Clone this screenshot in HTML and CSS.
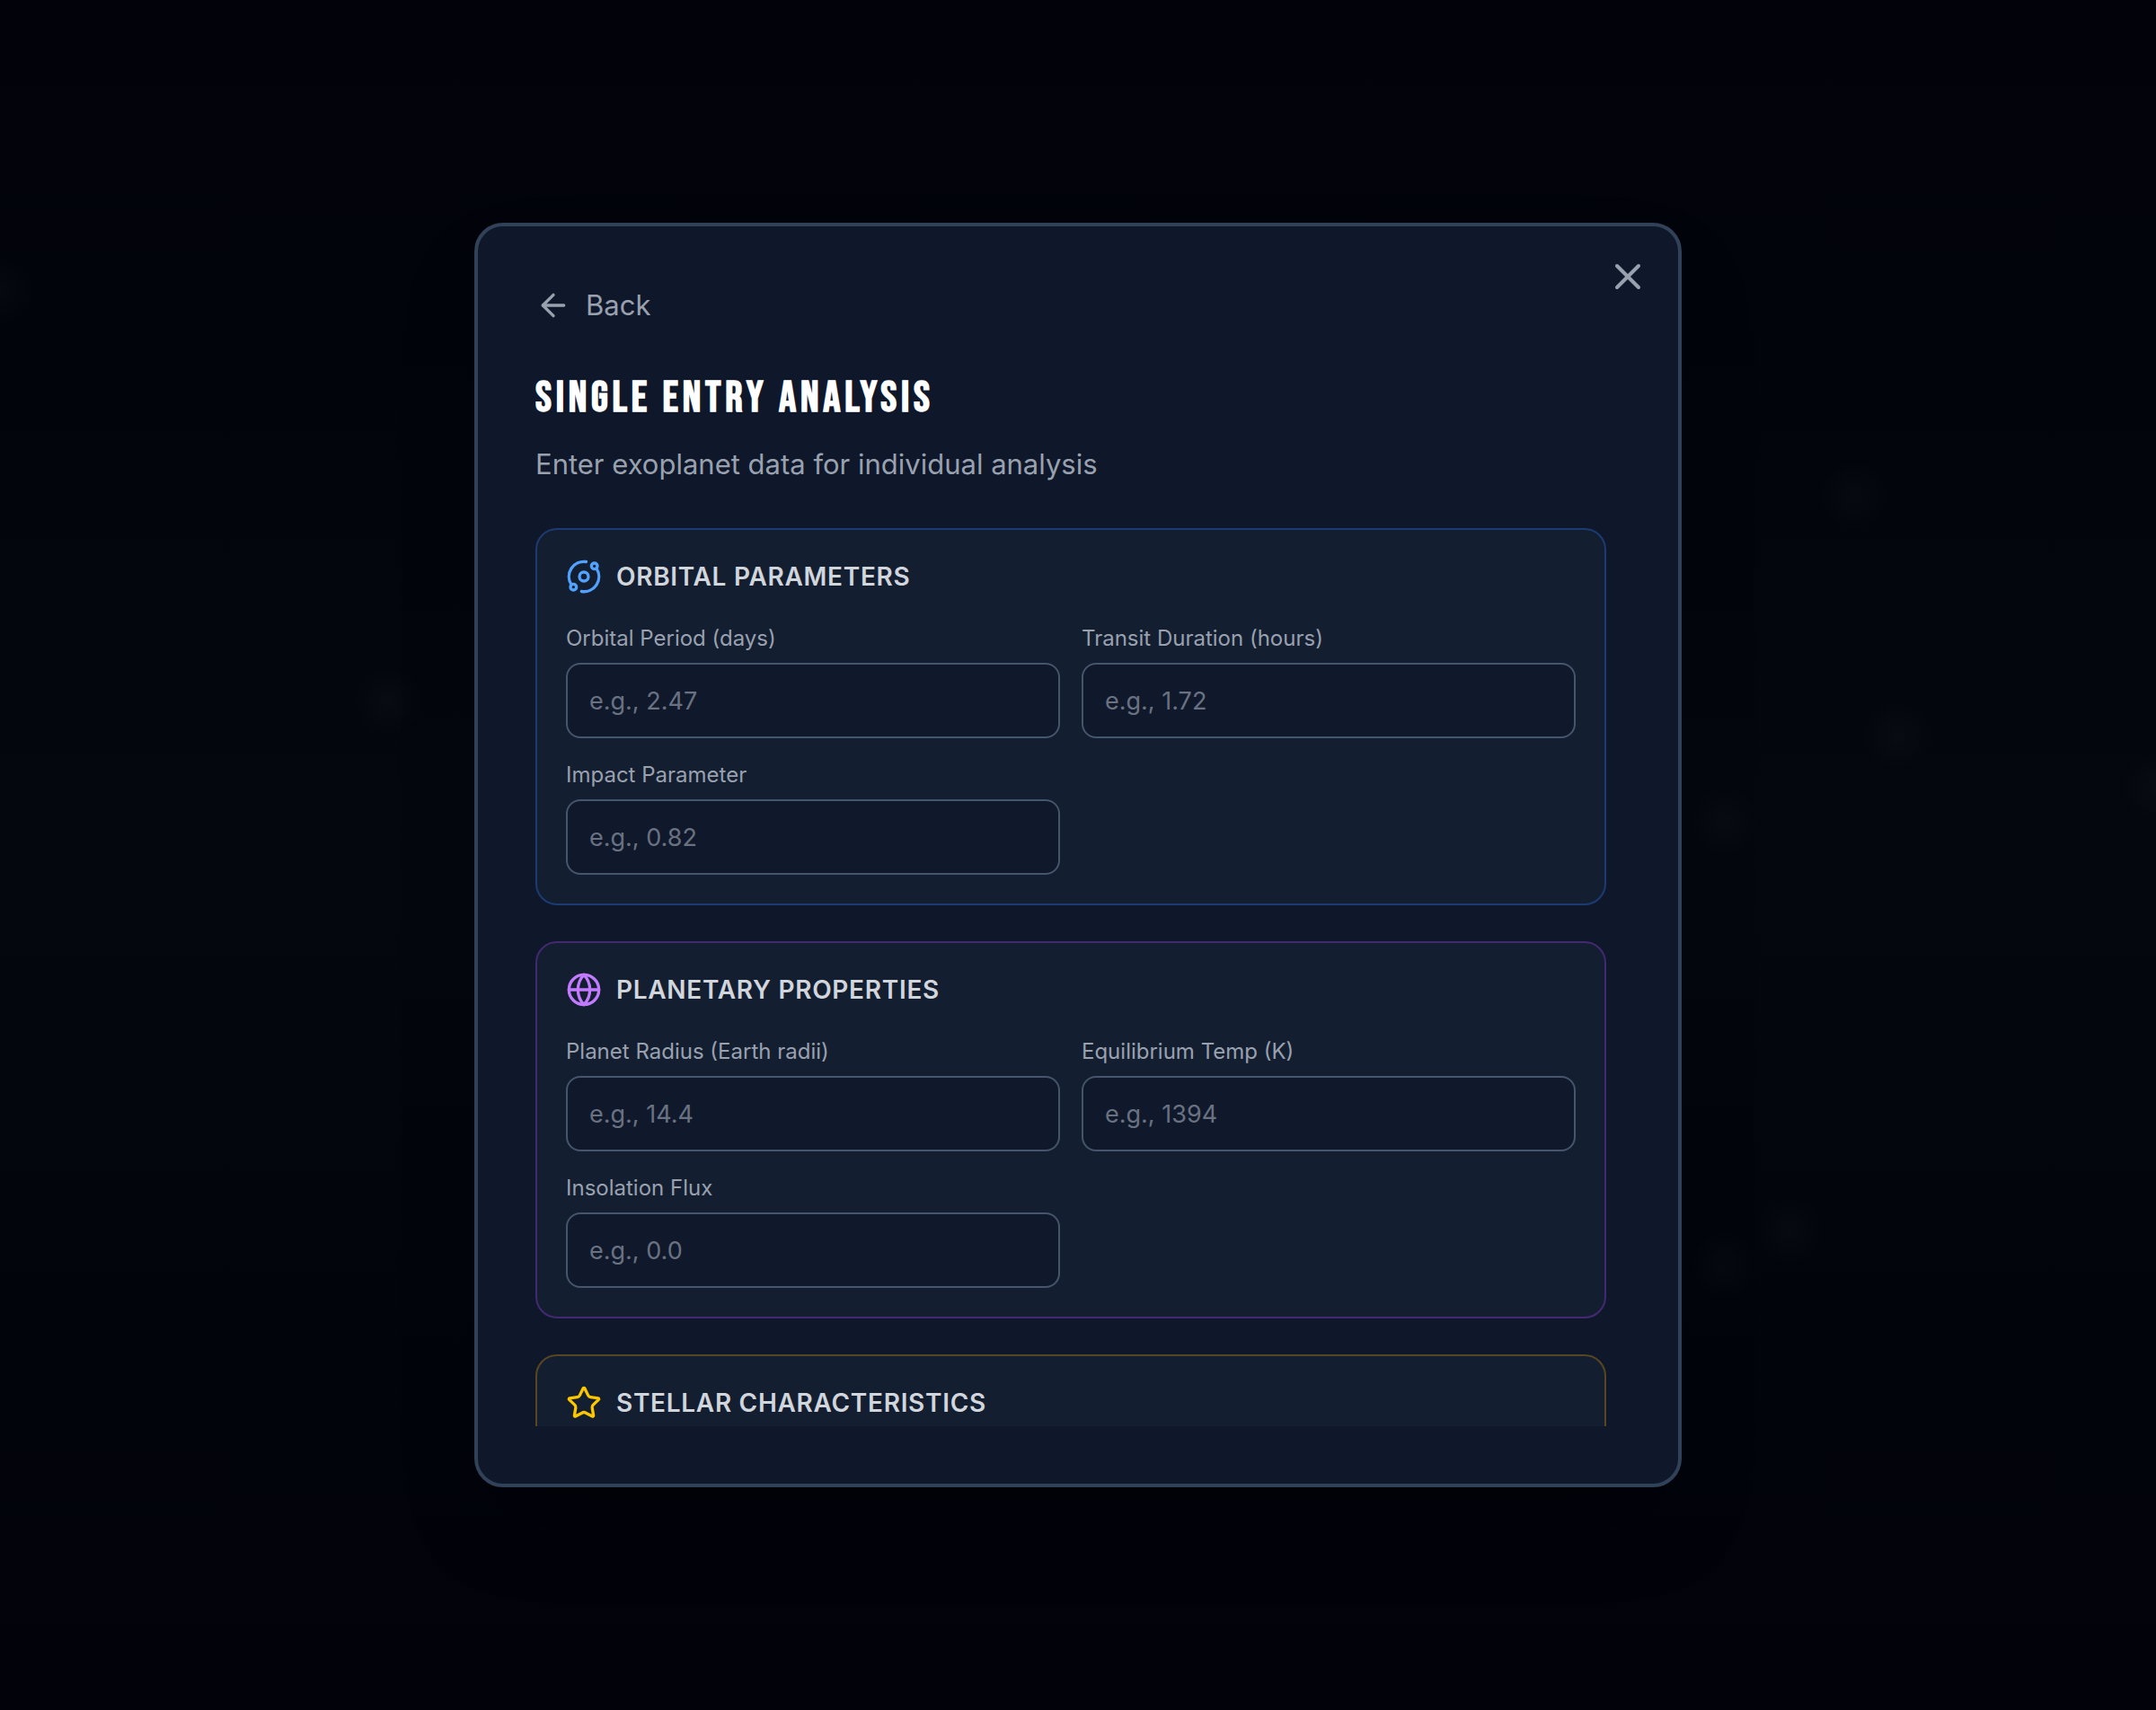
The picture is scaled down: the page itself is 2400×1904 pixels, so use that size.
FILE: index.html
```html
<!DOCTYPE html>
<html lang="en">
<head>
<meta charset="utf-8">
<meta name="viewport" content="width=device-width, initial-scale=1">
<title>Single Entry Analysis</title>
<link rel="stylesheet" href="styles.css">
</head>
<body>
<main class="backdrop">
  <section class="modal" role="dialog" aria-modal="true" aria-labelledby="dialog-title">
    <button class="close" type="button" aria-label="Close">
      <svg class="icon icon-close" viewBox="0 0 24 24" aria-hidden="true"><path d="M18 6 6 18"/><path d="m6 6 12 12"/></svg>
    </button>
    <div class="scroller">
      <button class="back" type="button">
        <svg class="icon" viewBox="0 0 24 24" aria-hidden="true"><path d="m12 19-7-7 7-7"/><path d="M19 12H5"/></svg>
        Back
      </button>
      <h1 class="title" id="dialog-title">SINGLE ENTRY ANALYSIS</h1>
      <p class="subtitle">Enter exoplanet data for individual analysis</p>

      <form class="groups">
        <section class="card card-orbital">
          <h2 class="card-title">
            <svg class="icon icon-orbital" viewBox="0 0 24 24" aria-hidden="true"><circle cx="12" cy="12" r="3"/><circle cx="19" cy="5" r="2"/><circle cx="5" cy="19" r="2"/><path d="M10.4 21.9a10 10 0 0 0 9.941-15.416"/><path d="M13.5 2.1a10 10 0 0 0-9.841 15.416"/></svg>
            ORBITAL PARAMETERS
          </h2>
          <div class="fields">
            <div class="field">
              <label for="period">Orbital Period (days)</label>
              <input id="period" type="text" inputmode="decimal" placeholder="e.g., 2.47">
            </div>
            <div class="field">
              <label for="duration">Transit Duration (hours)</label>
              <input id="duration" type="text" inputmode="decimal" placeholder="e.g., 1.72">
            </div>
            <div class="field">
              <label for="impact">Impact Parameter</label>
              <input id="impact" type="text" inputmode="decimal" placeholder="e.g., 0.82">
            </div>
          </div>
        </section>

        <section class="card card-planetary">
          <h2 class="card-title">
            <svg class="icon icon-planetary" viewBox="0 0 24 24" aria-hidden="true"><circle cx="12" cy="12" r="10"/><path d="M12 2a14.5 14.5 0 0 0 0 20 14.5 14.5 0 0 0 0-20"/><path d="M2 12h20"/></svg>
            PLANETARY PROPERTIES
          </h2>
          <div class="fields">
            <div class="field">
              <label for="radius">Planet Radius (Earth radii)</label>
              <input id="radius" type="text" inputmode="decimal" placeholder="e.g., 14.4">
            </div>
            <div class="field">
              <label for="temp">Equilibrium Temp (K)</label>
              <input id="temp" type="text" inputmode="decimal" placeholder="e.g., 1394">
            </div>
            <div class="field">
              <label for="flux">Insolation Flux</label>
              <input id="flux" type="text" inputmode="decimal" placeholder="e.g., 0.0">
            </div>
          </div>
        </section>

        <section class="card card-stellar">
          <h2 class="card-title">
            <svg class="icon icon-stellar" viewBox="0 0 24 24" aria-hidden="true"><path d="M11.525 2.295a.53.53 0 0 1 .95 0l2.31 4.679a2.123 2.123 0 0 0 1.595 1.16l5.166.756a.53.53 0 0 1 .294.904l-3.736 3.638a2.123 2.123 0 0 0-.611 1.878l.882 5.14a.53.53 0 0 1-.771.56l-4.618-2.428a2.122 2.122 0 0 0-1.973 0L6.396 21.01a.53.53 0 0 1-.77-.56l.881-5.139a2.122 2.122 0 0 0-.611-1.879L2.16 9.795a.53.53 0 0 1 .294-.906l5.165-.755a2.122 2.122 0 0 0 1.597-1.16z"/></svg>
            STELLAR CHARACTERISTICS
          </h2>
        </section>
      </form>
    </div>
  </section>
</main>
</body>
</html>
```
FILE: styles.css
```css
*,
*::before,
*::after {
  box-sizing: border-box;
}

:root {
  --muted: #99a1af;
  --line: #45556c;
  --star: rgb(255 255 255 / 2%), transparent 40px;
}

body {
  margin: 0;
  background: #01020a;
  color: var(--muted);
  font-family: Inter, "Liberation Sans", sans-serif;
  font-size: 31px;
  line-height: 48px;
}

/* Faint out-of-focus stars over the night sky */
.backdrop {
  display: flex;
  align-items: center;
  justify-content: center;
  min-height: 100vh;
  background:
    radial-gradient(circle at 0% 17%, var(--star)),
    radial-gradient(circle at 86% 29%, var(--star)),
    radial-gradient(circle at 100% 46%, var(--star)),
    radial-gradient(circle at 80% 48%, var(--star)),
    radial-gradient(circle at 88% 43%, var(--star)),
    radial-gradient(circle at 18% 41%, var(--star)),
    radial-gradient(circle at 80% 74%, var(--star)),
    radial-gradient(circle at 83% 72%, var(--star)),
    linear-gradient(#01020a, #04070e 50%, #01020a);
}

.modal {
  position: relative;
  display: flex;
  width: 100%;
  max-width: 1344px;
  max-height: calc(100vh - 496px);
  padding: 64px;
  border: 4px solid #314158;
  border-radius: 32px;
  background: #0f172a;
  box-shadow: 0 50px 100px -24px rgb(0 0 0 / 30%);
}

.scroller {
  flex: 1;
  padding-right: 16px;
  overflow-y: auto;
  scrollbar-width: none;
}

button {
  padding: 0;
  border: 0;
  background: none;
  color: var(--muted);
  font: inherit;
  cursor: pointer;
}

.icon {
  flex: none;
  width: 40px;
  height: 40px;
  fill: none;
  stroke: currentColor;
  stroke-width: 2;
  stroke-linecap: round;
  stroke-linejoin: round;
}

.close {
  position: absolute;
  top: 32px;
  right: 32px;
  display: flex;
}

.icon-close {
  width: 48px;
  height: 48px;
}

.back {
  display: flex;
  align-items: center;
  gap: 16px;
  margin-bottom: 48px;
}

.title {
  margin: 0 0 16px;
  color: #fff;
  font-family: "Bebas Neue", "Liberation Sans Narrow", sans-serif;
  font-size: 48px;
  font-weight: 700;
  letter-spacing: 0.1em;
  line-height: 64px;
}

.subtitle {
  margin: 0 0 46px;
  line-height: 50px;
}

.groups {
  display: grid;
  gap: 40px;
}

.card {
  padding: 32px;
  border: 2px solid;
  border-radius: 24px;
  background: #141e31;
}

.card-orbital {
  border-color: #1c3b72;
}

.card-planetary {
  border-color: #432a70;
}

.card-stellar {
  border-color: #564722;
}

.card-title {
  display: flex;
  align-items: center;
  gap: 16px;
  margin: 0;
  color: #d1d5dc;
  font-size: 28px;
  font-weight: 600;
  letter-spacing: 0.025em;
  line-height: 40px;
}

.icon-orbital {
  color: #51a2ff;
}

.icon-planetary {
  color: #c27aff;
}

.icon-stellar {
  color: #fdc700;
}

.fields {
  display: grid;
  grid-template-columns: repeat(2, minmax(0, 1fr));
  gap: 24px;
  margin-top: 32px;
}

.field {
  display: grid;
  gap: 10px;
}

.field label {
  font-size: 24px;
  line-height: 34px;
}

.field input {
  width: 100%;
  height: 84px;
  padding: 20px 24px;
  border: 2px solid var(--line);
  border-radius: 16px;
  background: #10192b;
  color: #fff;
  font: inherit;
  font-size: 27px;
  line-height: 40px;
}

.field input::placeholder {
  color: #6a7282;
  opacity: 1;
}
```
